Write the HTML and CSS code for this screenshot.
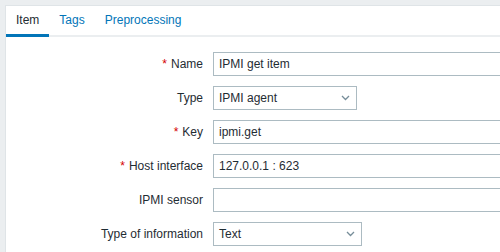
FILE: index.html
```html
<!DOCTYPE html>
<html lang="en">
<head>
  <meta charset="UTF-8" />
  <title>Item</title>
  <link rel="stylesheet" href="styles.css">
</head>
<body>
  <div class="card">
    <ul class="tabs">
      <li class="tab active">Item</li>
      <li class="tab">Tags</li>
      <li class="tab">Preprocessing</li>
    </ul>

    <div class="form">
      <label class="req">Name</label>
      <div class="field wide">IPMI get item</div>

      <label>Type</label>
      <div class="field select w-type">IPMI agent
        <svg width="9" height="6" viewBox="0 0 9 6"><path d="M1 1l3.5 3.5L8 1" fill="none" stroke="#768d99" stroke-width="1.3"/></svg>
      </div>

      <label class="req">Key</label>
      <div class="field wide">ipmi.get</div>

      <label class="req">Host interface</label>
      <div class="field wide">127.0.0.1 : 623</div>

      <label>IPMI sensor</label>
      <div class="field wide"></div>

      <label>Type of information</label>
      <div class="field select w-info">Text
        <svg width="9" height="6" viewBox="0 0 9 6"><path d="M1 1l3.5 3.5L8 1" fill="none" stroke="#768d99" stroke-width="1.3"/></svg>
      </div>
    </div>
  </div>
</body>
</html>
```

FILE: styles.css
```css
* { box-sizing: border-box; }
html, body { overflow: hidden; }
body {
  margin: 0;
  padding: 5px 0 0 5px;
  background: #ebeef0;
  font-family: "Liberation Sans", Arial, sans-serif;
  font-size: 12px;
  color: #1f2c33;
  height: 252px;
}
.card {
  background: white;
  border-top: 1px solid #dfe4e7;
  border-left: 1px solid #dfe4e7;
  height: 100%;
  overflow: hidden;
}
.tabs {
  list-style: none;
  margin: 0;
  padding: 0;
  display: flex;
  height: 31px;
  border-bottom: 2px solid #ebeef0;
}
.tab {
  padding: 0 10px;
  height: 29px;
  line-height: 29px;
  color: #0275b8;
}
.tab.active {
  color: #1f2c33;
  height: 31px;
  border-bottom: 3px solid #0275b8;
}
.form {
  display: grid;
  grid-template-columns: 197px 1fr;
  column-gap: 10px;
  row-gap: 10px;
  padding-top: 15px;
  justify-items: start;
}
.form label {
  justify-self: end;
  align-self: center;
  line-height: 24px;
}
.req::before {
  content: "*";
  color: #d40000;
  margin-right: 4px;
}
.field {
  height: 24px;
  line-height: 22px;
  border: 1px solid #acbbc2;
  padding: 0 5px;
  background: white;
}
.wide {
  width: 453px;
  min-width: 453px;
}
.select {
  display: flex;
  align-items: center;
  justify-content: space-between;
  padding-right: 6px;
}
.w-type { width: 144px; }
.w-info { width: 149px; }
```
